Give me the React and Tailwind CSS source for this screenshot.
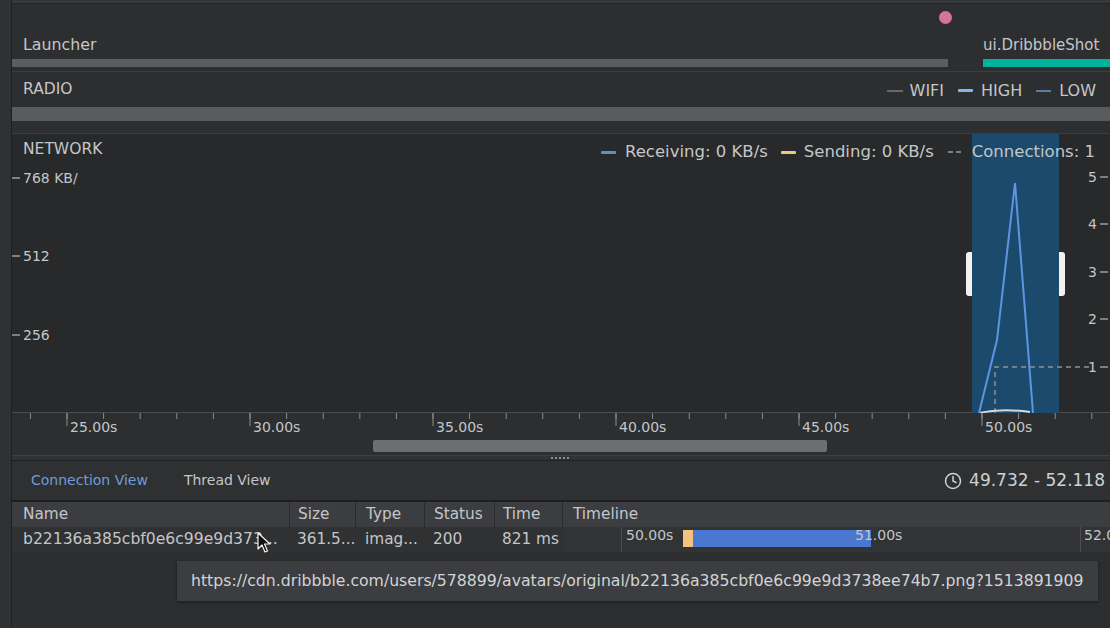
import { Clock } from 'lucide-react';

const MAJOR = [
  { x: 67, label: '25.00s' },
  { x: 250, label: '30.00s' },
  { x: 433, label: '35.00s' },
  { x: 616, label: '40.00s' },
  { x: 799, label: '45.00s' },
  { x: 982, label: '50.00s' },
];

// minor ticks every second (36.6px), shifted into the chart's local space
const MINOR = Array.from({ length: 30 }, (_, i) => 30.4 + i * 36.6 - 12).filter((x) => x < 1098);

function LegendDash({ color, dashed, className = '' }) {
  if (dashed) {
    return (
      <span className={`flex gap-[3px] ${className}`}>
        <span className={`w-[5px] h-[2px] ${color}`} />
        <span className={`w-[5px] h-[2px] ${color}`} />
      </span>
    );
  }
  return <span className={`w-[15px] h-[3px] rounded-[1px] ${color} ${className}`} />;
}

function NetworkChart() {
  return (
    <div className="relative h-[279px] bg-[#28292b] border-b border-[#4a4c4f]">
      <svg className="absolute inset-0" width="1098" height="279" viewBox="0 0 1098 279">
        <rect x="960" y="0" width="87" height="279" fill="#1c4a6c" />
        {[44, 122, 201].map((y) => (
          <line key={y} x1="0" y1={y} x2="8" y2={y} stroke="#9a9c9e" strokeWidth="1.5" />
        ))}
        {[43, 90, 138, 185, 233].map((y) => (
          <line key={y} x1="1088" y1={y} x2="1096" y2={y} stroke="#9a9c9e" strokeWidth="1.5" />
        ))}
        <path d="M983 279 V233 H1080" fill="none" stroke="#8d9196" strokeWidth="1.5" strokeDasharray="5 4" />
        <path d="M967 279 Q990 274 1018 278" fill="none" stroke="#d8d8d8" strokeWidth="2" />
        <polyline points="967,279 985,206 1003,49 1021,279" fill="none" stroke="#5e95e0" strokeWidth="2" />
        <path d="M960 118 H957 A3 3 0 0 0 954 121 V159 A3 3 0 0 0 957 162 H960 Z" fill="#f2f2f2" />
        <path d="M1047 118 H1050 A3 3 0 0 1 1053 121 V159 A3 3 0 0 1 1050 162 H1047 Z" fill="#f2f2f2" />
      </svg>

      <div className="relative flex items-center justify-between h-[30px] pl-[11px] pr-[15px] pt-[2px]">
        <span className="text-[15.5px] text-[#c4c6c8]">NETWORK</span>
        <div className="flex items-center text-[16.5px] text-[#c4c6c8] translate-y-[2px]">
          <LegendDash color="bg-[#5b8fd4]" />
          <span className="ml-[9px]">Receiving: 0 KB/s</span>
          <LegendDash color="bg-[#f2c879]" className="ml-[13px]" />
          <span className="ml-[8px]">Sending: 0 KB/s</span>
          <LegendDash color="bg-[#7d8085]" dashed className="ml-[14px]" />
          <span className="ml-[11px]">Connections: 1</span>
        </div>
      </div>

      {[
        { y: 44, t: '768 KB/' },
        { y: 122, t: '512' },
        { y: 201, t: '256' },
      ].map((l) => (
        <span
          key={l.t}
          className="absolute left-[11px] text-[14px] leading-[16px] text-[#c4c6c8]"
          style={{ top: l.y - 8 }}
        >
          {l.t}
        </span>
      ))}
      {[
        { y: 43, t: '5' },
        { y: 90, t: '4' },
        { y: 138, t: '3' },
        { y: 185, t: '2' },
        { y: 233, t: '1' },
      ].map((l) => (
        <span
          key={l.t}
          className="absolute left-[1076px] text-[14px] leading-[16px] text-[#c4c6c8]"
          style={{ top: l.y - 8 }}
        >
          {l.t}
        </span>
      ))}
    </div>
  );
}

function TimeAxis() {
  return (
    <div className="relative h-[24px]">
      <svg className="absolute inset-0" width="1098" height="24" viewBox="0 0 1098 24">
        {MINOR.map((x) => (
          <line key={x} x1={x} y1="0" x2={x} y2="6" stroke="#8a8c8f" strokeWidth="1" />
        ))}
        {MAJOR.map((m) => (
          <line key={m.x} x1={m.x - 12} y1="0" x2={m.x - 12} y2="13" stroke="#8a8c8f" strokeWidth="1" />
        ))}
      </svg>
      {MAJOR.map((m) => (
        <span
          key={m.label}
          className="absolute top-[6px] text-[14px] leading-[16px] text-[#c4c6c8]"
          style={{ left: m.x - 12 + 3 }}
        >
          {m.label}
        </span>
      ))}
    </div>
  );
}

function Cursor() {
  return (
    <svg className="absolute left-[245px] top-[5px]" width="14" height="21" viewBox="0 0 14 21">
      <path d="M1 1 L1 17 L5 13 L8 20 L10.5 19 L7.5 12 L13 12 Z" fill="#111" stroke="#f2f2f2" strokeWidth="1.2" strokeLinejoin="round" />
    </svg>
  );
}

export default function App() {
  return (
    <div className="w-[1110px] h-[628px] overflow-hidden flex bg-[#2c2e30] text-[#c4c6c8] font-['DejaVu_Sans',sans-serif]">
      {/* left gutter */}
      <div className="w-[12px] shrink-0 bg-[#2f3133] border-r border-[#1f2022]" />

      <div className="relative flex-1 flex flex-col min-w-0">
        <div className="h-[4px] bg-[#36383b] border-b border-[#222325]" />

        {/* event row */}
        <div className="relative h-[68px] border-b border-[#3b3d40]">
          <span className="absolute left-[927px] top-[7px] w-[13px] h-[13px] rounded-full bg-[#d4739c]" />
          <div className="flex items-end h-full pb-[4px]">
            <div className="flex-1 flex flex-col">
              <span className="pl-[11px] text-[15.8px] leading-[18px] mb-[5px]">Launcher</span>
              <div className="h-[8px] bg-[#5b5e60]" />
            </div>
            <div className="w-[127px] ml-[35px] flex flex-col">
              <span className="text-[15px] leading-[18px] mb-[5px] whitespace-nowrap">ui.DribbbleShot</span>
              <div className="h-[8px] bg-[#00b39f]" />
            </div>
          </div>
        </div>

        {/* radio row */}
        <div className="h-[62px] border-b border-[#3b3d40] flex flex-col">
          <div className="flex items-center justify-between h-[35px] pl-[11px] pr-[14px]">
            <span className="text-[15.5px]">RADIO</span>
            <div className="flex items-center text-[16px] translate-y-[1px]">
              <span className="w-[16px] h-[2px] bg-[#66696c]" />
              <span className="ml-[7px]">WIFI</span>
              <span className="ml-[14px] w-[15px] h-[3px] rounded-[1px] bg-[#86b6f2]" />
              <span className="ml-[8px]">HIGH</span>
              <span className="ml-[14px] w-[15px] h-[2px] bg-[#5a7ca8]" />
              <span className="ml-[8px]">LOW</span>
            </div>
          </div>
          <div className="h-[14px] bg-[#595c5e]" />
        </div>

        <NetworkChart />
        <TimeAxis />

        {/* horizontal scrollbar */}
        <div className="h-[18px] pt-[3px]">
          <div className="ml-[361px] w-[454px] h-[12px] rounded-[2px] bg-[#6c6e71]" />
        </div>

        {/* splitter */}
        <div className="h-[6px] bg-[#303234] border-t border-[#3e4043] border-b border-b-[#1f2022] flex justify-center items-center">
          <div className="grid grid-cols-5 gap-x-[2px] gap-y-[1px] ml-[-2px]">
            {Array.from({ length: 5 }, (_, i) => (
              <span key={i} className="w-[2px] h-[2px] bg-[#8a8c8f]" />
            ))}
          </div>
        </div>

        {/* tabs */}
        <div className="h-[39px] flex items-center pl-[19px] pr-[5px] bg-[#2e3032]">
          <span className="text-[14px] text-[#6f9dd6]">Connection View</span>
          <span className="ml-[36px] text-[14px]">Thread View</span>
          <div className="ml-auto flex items-center gap-[7px]">
            <Clock size={18} strokeWidth={2} className="text-[#cfd1d3]" />
            <span className="text-[17px] text-[#cfd1d3]">49.732 - 52.118</span>
          </div>
        </div>

        {/* table header */}
        <div className="flex h-[27px] bg-[#3b3d40] border-t-2 border-[#1d1e20] text-[15.3px] leading-[25px]">
          <div className="w-[277px] pl-[11px]">Name</div>
          <div className="w-[66px] pl-[8px] border-l border-[#2a2b2d]">Size</div>
          <div className="w-[69px] pl-[10px] border-l border-[#2a2b2d]">Type</div>
          <div className="w-[70px] pl-[9px] border-l border-[#2a2b2d]">Status</div>
          <div className="w-[68px] pl-[8px] border-l border-[#2a2b2d]">Time</div>
          <div className="flex-1 pl-[10px] border-l border-[#2a2b2d]">Timeline</div>
        </div>

        {/* table row */}
        <div className="flex h-[25px] bg-[#2f3133] text-[15.3px] leading-[25px] whitespace-nowrap">
          <div className="relative w-[277px] pl-[11px] text-[15.6px]">
            b22136a385cbf0e6c99e9d373...
            <Cursor />
          </div>
          <div className="w-[66px] pl-[8px]">361.5...</div>
          <div className="w-[69px] pl-[10px]">imag...</div>
          <div className="w-[70px] pl-[9px]">200</div>
          <div className="w-[68px] pl-[8px]">821 ms</div>
          <div className="relative flex-1 overflow-hidden bg-[#313335]">
            <span className="absolute left-[59px] top-0 w-px h-[25px] bg-[#4c4e51]" />
            <span className="absolute left-[64px] top-[-4px] text-[14px]">50.00s</span>
            <span className="absolute left-[121px] top-[3px] w-[10px] h-[17px] bg-[#f4c27f]" />
            <span className="absolute left-[131px] top-[3px] w-[178px] h-[17px] bg-[#4a78d0]" />
            <span className="absolute left-[293px] top-[-4px] text-[14px]">51.00s</span>
            <span className="absolute left-[518px] top-0 w-px h-[25px] bg-[#4c4e51]" />
            <span className="absolute left-[522px] top-[-4px] text-[14px]">52.00s</span>
          </div>
        </div>

        <div className="flex-1 bg-[#2c2e30]" />

        {/* url tooltip */}
        <div className="absolute left-[165px] top-[561px] w-[921px] h-[40px] flex items-center pl-[14px] bg-[#3b3d40] shadow-[0_1px_3px_rgba(0,0,0,0.5)] text-[15.7px] text-[#d2d4d6] whitespace-nowrap">
          https://cdn.dribbble.com/users/578899/avatars/original/b22136a385cbf0e6c99e9d3738ee74b7.png?1513891909
        </div>
      </div>
    </div>
  );
}
